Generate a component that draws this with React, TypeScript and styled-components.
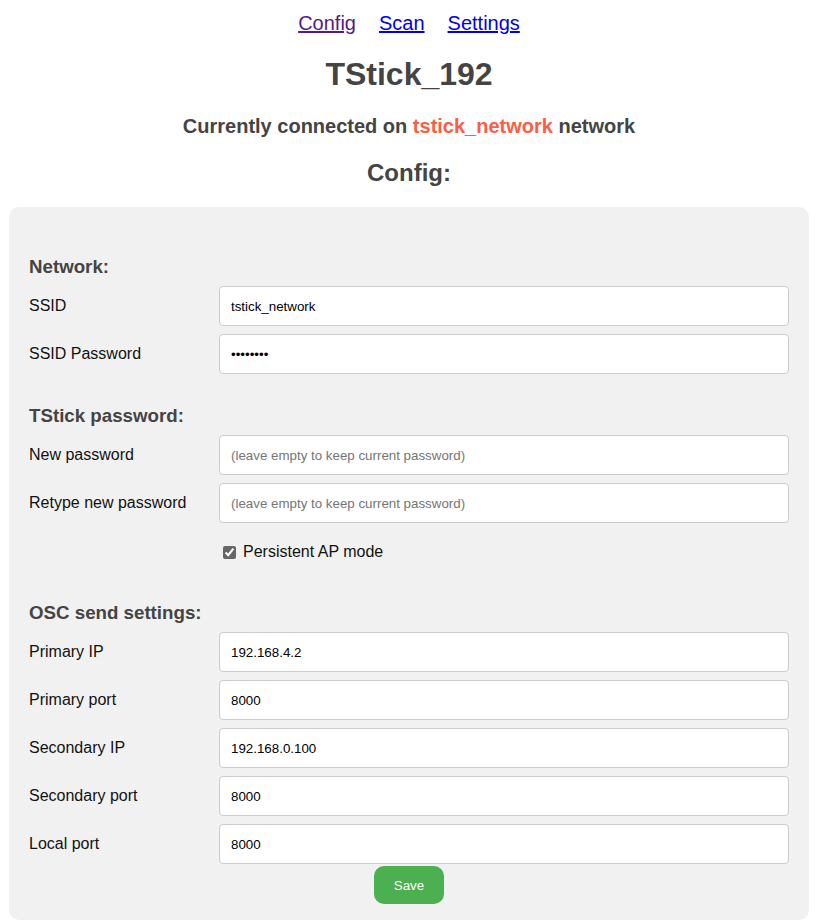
import React from "react";
import styled, { createGlobalStyle } from "styled-components";

const Global = createGlobalStyle`
  body {
    margin: 8px 11px 8px 8px;
    font-family: "Liberation Sans", Arial, sans-serif;
    background: #fff;
  }
`;

const Nav = styled.nav`
  display: flex;
  justify-content: center;
  gap: 23px;
  margin-top: 4px;
  font-size: 20px;
  line-height: 23px;
`;

const NavLink = styled.a<{ $visited?: boolean }>`
  color: ${(p) => (p.$visited ? "#551a8b" : "#0000ee")};
  text-decoration: underline;
`;

const Title = styled.h1`
  margin: 21px 0 0;
  text-align: center;
  font-size: 32px;
  line-height: 37px;
  color: #444;
  font-weight: bold;
`;

const Subtitle = styled.h3`
  margin: 22px 0 0;
  text-align: center;
  font-size: 20px;
  line-height: 23px;
  color: #444;
`;

const Accent = styled.span`
  color: #ff5c45;
`;

const PageHeading = styled.h2`
  margin: 21px 0 0;
  text-align: center;
  font-size: 24px;
  line-height: 28px;
  color: #444;
`;

const Panel = styled.form`
  margin: 20px 0 0 1px;
  width: 800px;
  box-sizing: border-box;
  background: #f1f1f1;
  border-radius: 10px;
  padding: 20px 20px 16px;
  display: flex;
  flex-direction: column;
`;

const SectionHeading = styled.h3<{ $top: number }>`
  margin: ${(p) => p.$top}px 0 8px;
  font-size: 18.72px;
  line-height: 22px;
  color: #444;
`;

const Rows = styled.div`
  display: flex;
  flex-direction: column;
  gap: 8px;
`;

const Row = styled.div`
  display: grid;
  grid-template-columns: 190px 1fr;
  align-items: center;
`;

const Label = styled.label`
  font-size: 16px;
  color: #111;
`;

const Input = styled.input`
  height: 40px;
  box-sizing: border-box;
  border: 1px solid #ccc;
  border-radius: 4px;
  background: #fff;
  padding: 0 11px;
  font-family: "Liberation Sans", Arial, sans-serif;
  font-size: 13.33px;
  color: #000;
  outline: none;
  &::placeholder {
    color: #757575;
  }
`;

const CheckRow = styled.label`
  display: flex;
  align-items: center;
  gap: 7px;
  margin: 19px 0 0 190px;
  height: 20px;
  font-size: 16px;
  color: #111;
`;

const Check = styled.input`
  width: 13px;
  height: 13px;
  margin: 0 0 0 4px;
  accent-color: #666;
`;

const SaveButton = styled.button`
  align-self: center;
  margin-top: 2px;
  width: 70px;
  height: 38px;
  border: none;
  border-radius: 10px;
  background: #4caf50;
  color: #fff;
  font-family: "Liberation Sans", Arial, sans-serif;
  font-size: 13.33px;
  cursor: pointer;
`;

type Field = { label: string; value?: string; type?: string; placeholder?: string };

const FieldRows = ({ fields }: { fields: Field[] }) => (
  <Rows>
    {fields.map((f) => (
      <Row key={f.label}>
        <Label>{f.label}</Label>
        <Input
          type={f.type ?? "text"}
          defaultValue={f.value}
          placeholder={f.placeholder}
        />
      </Row>
    ))}
  </Rows>
);

export default function App() {
  const keep = "(leave empty to keep current password)";
  return (
    <>
      <Global />
      <Nav>
        <NavLink href="#" $visited>
          Config
        </NavLink>
        <NavLink href="#">Scan</NavLink>
        <NavLink href="#">Settings</NavLink>
      </Nav>
      <Title>TStick_192</Title>
      <Subtitle>
        Currently connected on <Accent>tstick_network</Accent> network
      </Subtitle>
      <PageHeading>Config:</PageHeading>
      <Panel onSubmit={(e) => e.preventDefault()}>
        <SectionHeading $top={29}>Network:</SectionHeading>
        <FieldRows
          fields={[
            { label: "SSID", value: "tstick_network" },
            { label: "SSID Password", value: "password", type: "password" },
          ]}
        />
        <SectionHeading $top={31}>TStick password:</SectionHeading>
        <FieldRows
          fields={[
            { label: "New password", type: "password", placeholder: keep },
            { label: "Retype new password", type: "password", placeholder: keep },
          ]}
        />
        <CheckRow>
          <Check type="checkbox" defaultChecked />
          Persistent AP mode
        </CheckRow>
        <SectionHeading $top={40}>OSC send settings:</SectionHeading>
        <FieldRows
          fields={[
            { label: "Primary IP", value: "192.168.4.2" },
            { label: "Primary port", value: "8000" },
            { label: "Secondary IP", value: "192.168.0.100" },
            { label: "Secondary port", value: "8000" },
            { label: "Local port", value: "8000" },
          ]}
        />
        <SaveButton type="submit">Save</SaveButton>
      </Panel>
    </>
  );
}
